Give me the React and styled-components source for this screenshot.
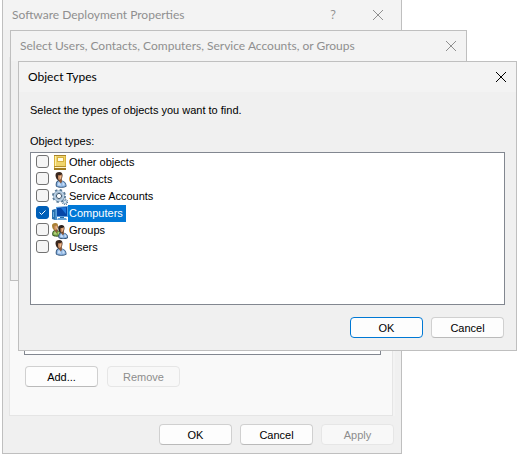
import React from 'react';
import styled, { createGlobalStyle, css } from 'styled-components';

const GlobalStyle = createGlobalStyle`
  *, *::before, *::after { box-sizing: border-box; }
  body { margin: 0; background: #fff; }
`;

const bodyFont = "'Liberation Sans', Arial, sans-serif";
const titleFont = "Lato, 'Open Sans', sans-serif";

const Desktop = styled.main`
  position: relative;
  min-height: 100vh;
  overflow: hidden;
  font: 11px/16px ${bodyFont};
  color: #000;
`;

const Window = styled.section`
  position: absolute;
  display: flex;
  flex-direction: column;
  background: #f0f0f0;
  border: 1px solid #bfbfbf;
`;

const PropertiesWindow = styled(Window)`
  top: 0;
  left: 2px;
  right: 116px;
  border-top: 0;
`;

const SelectWindow = styled(Window)`
  top: 30px;
  left: 10px;
  right: 51px;
`;

const ObjectTypesWindow = styled(Window)`
  top: 61px;
  left: 18px;
  right: 1px;
`;

const TitleBar = styled.header`
  display: flex;
  align-items: center;
  height: 30px;
  padding: 0 7px 0 9px;
  background: #f3f3f3;
  color: ${({ $active }) => ($active ? '#000' : '#8f8f8f')};
`;

const Title = styled.h2`
  flex: 1;
  margin: 0;
  font: 400 12px/18px ${titleFont};
  white-space: nowrap;
`;

const CaptionButton = styled.button`
  display: grid;
  place-items: center;
  width: ${({ $wide }) => ($wide ? '74px' : '16px')};
  height: 20px;
  padding: 0;
  border: 0;
  background: none;
  color: inherit;
  font: 400 12px/20px 'Open Sans', sans-serif;
`;

const CaptionButtons = styled.div`
  display: flex;
  align-items: center;
  padding-right: 8px;
`;

const TabPage = styled.div`
  margin: 27px 8px 0 6px;
  padding: 0 11px 28px 14px;
  background: #f9f9f9;
  border: 1px solid #e5e5e5;
  box-shadow: 2px 0 0 #f3f3f3;
`;

const MemberList = styled.ul`
  min-height: 297px;
  margin: 0;
  padding: 0;
  background: #fff;
  border: 1px solid #828790;
`;

const ButtonRow = styled.div`
  display: flex;
  justify-content: ${({ $align }) => $align || 'flex-end'};
  gap: ${({ $gap }) => $gap || '8px'};
  padding: ${({ $pad }) => $pad};
`;

const Button = styled.button`
  width: 73px;
  height: 21px;
  padding: 0;
  font: 11px/16px ${bodyFont};
  color: #000;
  background: #fdfdfd;
  border: 1px solid #d0d0d0;
  border-bottom-color: #bababa;
  border-radius: 4px;
  ${({ $primary }) => $primary && css`
    border-color: #0078d4;
  `}
  &:disabled {
    color: #8d8d8d;
    background: #f8f8f8;
    border-color: #e6e6e6;
  }
`;

const SelectBody = styled.div`
  min-height: 219px;
`;

const DialogBody = styled.div`
  display: flex;
  flex-direction: column;
  padding: 10px 11px 12px;
`;

const Instruction = styled.p`
  margin: 0 0 15px;
`;

const ListLabel = styled.p`
  margin: 0 0 3px;
`;

const TypeList = styled.ul`
  min-height: 153px;
  margin: 0;
  padding: 1px 5px;
  list-style: none;
  background: #fff;
  border: 1px solid #828790;
`;

const TypeRow = styled.label`
  display: flex;
  align-items: center;
  height: 17px;
`;

const CheckBox = styled.span`
  display: grid;
  width: 13px;
  height: 13px;
  margin-bottom: 3px;

  > * { grid-area: 1 / 1; }
`;

const CheckInput = styled.input`
  appearance: none;
  width: 13px;
  height: 13px;
  margin: 0;
  background: #f5f5f5;
  border: 1px solid #727272;
  border-radius: 3px;
  &:checked {
    background: #005fb8;
    border-color: #005fb8;
  }
  &:not(:checked) + svg { visibility: hidden; }
`;

const IconSlot = styled.span`
  display: flex;
  width: 16px;
  margin-left: 3px;
`;

const RowText = styled.span`
  height: 17px;
  padding: 0 3px 0 1px;
  line-height: 17px;
  ${({ $selected }) => $selected && css`
    background: #0078d7;
    color: #fff;
  `}
`;

const CloseIcon = () => (
  <svg width="12" height="12" viewBox="0 0 12 12" fill="none" stroke="currentColor" aria-hidden="true">
    <path d="M1 1l10 10M11 1L1 11" />
  </svg>
);

const CheckMark = () => (
  <svg width="13" height="13" viewBox="0 0 13 13" fill="none" stroke="#fff" aria-hidden="true" pointerEvents="none">
    <path d="M3.500 6.500l2 2 4-4" />
  </svg>
);

const BookIcon = () => (
  <svg width="16" height="16" viewBox="0 0 16 16" aria-hidden="true">
    <path d="M2 0h12v15H2z" fill="#d9b23a" />
    <path d="M2 0h12v1H2z" fill="#a8832b" />
    <path d="M3 1h10v10H3z" fill="#efd46b" />
    <path d="M3 1h1v10H3z" fill="#fbeeaa" />
    <path d="M5 2h7v5H5z" fill="#d5b040" />
    <path d="M6 3h5v3H6z" fill="#fffbe6" />
    <path d="M2 11h12v1H2z" fill="#b58d2b" />
    <path d="M3 12h11v1H3z" fill="#fff6cf" />
    <path d="M2 13h12v2H2z" fill="#a17c1f" />
  </svg>
);

const PersonShape = ({ hair, light, mid, edge }) => (
  <>
    <path d="M4 14.500C3 11 4.500 8.500 7 8l3 .5c3 .8 4.800 3 4.500 6-2 1.700-8 1.900-10.500 0z" fill={edge} />
    <path d="M4.800 14c-.6-2.800.5-4.600 2.400-5.200L9 11l1-2c2.600.8 3.800 2.600 3.700 5-2 1.100-6.800 1.300-8.900 0z" fill={mid} />
    <path d="M6 13.500c-.4-2 .2-3 1.300-3.600l2.200 3.600zM10.500 10.200c1.500.6 2.100 1.600 2.200 3l-2.200.5z" fill={light} />
    <path d="M6.500 7h3.400v2.200L9 11.500 6.700 9z" fill="#8f5a39" />
    <path d="M3.500 3.200C3.500 1 5 0 7.200 0c2.600 0 3.500 1.400 3.300 3.800C10.300 6.500 9 8.500 7.300 8.500c-2.300 0-3.600-2.600-3.800-5.300z" fill={hair} />
    <path d="M6.400 3c1.200.5 2.200.3 3.200-.7.8 2.500-.2 5.600-2 5.900C6 8.400 5.700 5.200 6.400 3z" fill="#c98d62" />
    <path d="M7.500 4c.8 0 1.300-.2 1.700-.6.2 1.500-.2 3.200-1.200 3.800z" fill="#efbc91" />
  </>
);

const UserIcon = () => (
  <svg width="16" height="16" viewBox="0 0 16 16" aria-hidden="true">
    <PersonShape hair="#39271d" light="#c9def6" mid="#8db5e3" edge="#36587d" />
  </svg>
);

const GroupIcon = () => (
  <svg width="16" height="16" viewBox="0 0 16 16" aria-hidden="true">
    <g transform="translate(-3 0) scale(.86)">
      <PersonShape hair="#a98034" light="#b4d27e" mid="#77a445" edge="#2d4f20" />
    </g>
    <g transform="translate(3 2) scale(.9)">
      <PersonShape hair="#2b201c" light="#c9def6" mid="#83abd8" edge="#315171" />
    </g>
  </svg>
);

const GearIcon = () => (
  <svg width="16" height="16" viewBox="0 0 16 16" fill="none" aria-hidden="true">
    <circle cx="7" cy="7" r="6" stroke="#5c7c98" strokeWidth="2" strokeDasharray="2.350 2.362" />
    <circle cx="7" cy="7" r="4.400" stroke="#5c7c98" strokeWidth="2.400" />
    <circle cx="7" cy="7" r="4.300" stroke="#bcd3e7" strokeWidth="1.800" />
    <circle cx="7" cy="7" r="2.600" fill="#fff" stroke="#3d556c" strokeWidth="1" />
    <circle cx="13" cy="13" r="2.500" stroke="#5b7993" strokeWidth="1.400" strokeDasharray="1 .963" />
    <circle cx="13" cy="13" r="1.500" fill="#fff" stroke="#86a9c6" strokeWidth="1.200" />
  </svg>
);

const ComputerIcon = () => (
  <svg width="16" height="16" viewBox="0 0 16 16" aria-hidden="true">
    <path d="M0 4l3-1v11l-3-1z" fill="#2870ad" />
    <path d="M1 6h1v5H1z" fill="#69aee0" />
    <path d="M3 3h2v11H3z" fill="#478fc9" />
    <path d="M4 1l12-1v11H4z" fill="#5a9fdc" />
    <path d="M5 2l10-1v9H5z" fill="#0647a7" />
    <path d="M9 2l5-.5V8z" fill="#1d76dc" />
    <path d="M8 11h4v1H8z" fill="#276ca9" />
    <path d="M6 12h8l1 2H5z" fill="#65a5d8" />
  </svg>
);

const objectTypes = [
  { name: 'Other objects', Icon: BookIcon },
  { name: 'Contacts', Icon: UserIcon },
  { name: 'Service Accounts', Icon: GearIcon },
  { name: 'Computers', Icon: ComputerIcon, selected: true },
  { name: 'Groups', Icon: GroupIcon },
  { name: 'Users', Icon: UserIcon },
];

export default function App() {
  return (
    <>
      <GlobalStyle />
      <Desktop>
        <PropertiesWindow aria-label="Software Deployment Properties">
          <TitleBar>
            <Title>Software Deployment Properties</Title>
            <CaptionButtons>
              <CaptionButton $wide>?</CaptionButton>
              <CaptionButton aria-label="Close"><CloseIcon /></CaptionButton>
            </CaptionButtons>
          </TitleBar>
          <TabPage>
            <MemberList />
            <ButtonRow $align="flex-start" $gap="9px" $pad="11px 0 0 1px">
              <Button>Add...</Button>
              <Button disabled>Remove</Button>
            </ButtonRow>
          </TabPage>
          <ButtonRow $pad="8px 7px 8px 8px">
            <Button>OK</Button>
            <Button>Cancel</Button>
            <Button disabled>Apply</Button>
          </ButtonRow>
        </PropertiesWindow>

        <SelectWindow aria-label="Select Users, Contacts, Computers, Service Accounts, or Groups">
          <TitleBar>
            <Title>Select Users, Contacts, Computers, Service Accounts, or Groups</Title>
            <CaptionButton aria-label="Close"><CloseIcon /></CaptionButton>
          </TitleBar>
          <SelectBody />
        </SelectWindow>

        <ObjectTypesWindow role="dialog" aria-label="Object Types">
          <TitleBar $active>
            <Title>Object Types</Title>
            <CaptionButton aria-label="Close"><CloseIcon /></CaptionButton>
          </TitleBar>
          <DialogBody>
            <Instruction>Select the types of objects you want to find.</Instruction>
            <ListLabel id="types-label">Object types:</ListLabel>
            <TypeList aria-labelledby="types-label">
              {objectTypes.map(({ name, Icon, selected }) => (
                <li key={name}>
                  <TypeRow>
                    <CheckBox>
                      <CheckInput type="checkbox" defaultChecked={selected} />
                      <CheckMark />
                    </CheckBox>
                    <IconSlot><Icon /></IconSlot>
                    <RowText $selected={selected}>{name}</RowText>
                  </TypeRow>
                </li>
              ))}
            </TypeList>
            <ButtonRow $pad="12px 1px 0 0">
              <Button $primary>OK</Button>
              <Button>Cancel</Button>
            </ButtonRow>
          </DialogBody>
        </ObjectTypesWindow>
      </Desktop>
    </>
  );
}
